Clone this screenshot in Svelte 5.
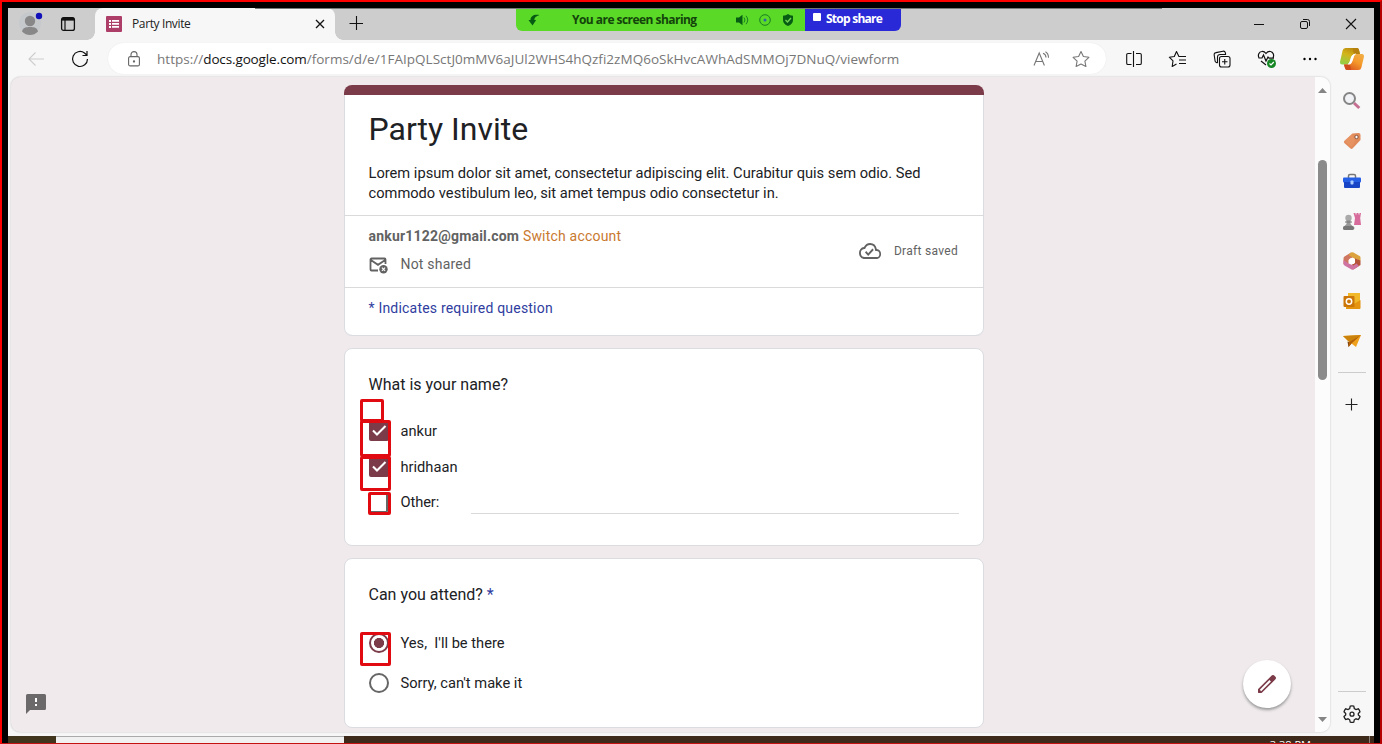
<script>
  const names = [
    { label: 'ankur', checked: true },
    { label: 'hridhaan', checked: true }
  ];
  const replies = [
    { label: "Yes,\u00a0 I'll be there", selected: true },
    { label: "Sorry, can't make it", selected: false }
  ];
  const marks = [
    { x: 360, y: 399, w: 24, h: 23 },
    { x: 360, y: 420, w: 31, h: 37 },
    { x: 360, y: 456, w: 31, h: 35 },
    { x: 368, y: 492, w: 23, h: 23 },
    { x: 360, y: 632, w: 31, h: 34 }
  ];
</script>

<div class="screen">
  <div class="window">
    <header class="tabs">
      <div class="lead">
        <svg class="avatar" width="26" height="26" viewBox="0 0 26 26">
          <circle cx="12" cy="14" r="11" fill="#c5c9cc" />
          <circle cx="12" cy="12" r="5.2" fill="#888" />
          <path d="M4 22.500C5 18.500 8 18 12 18s7 .5 8 4.500Q16.500 26 12 26T4 22.500Z" fill="#888" />
          <circle cx="21" cy="7" r="3.200" fill="#1210b8" />
        </svg>
        <svg class="workspace" width="16" height="16" viewBox="0 0 16 16" fill="none" stroke="#111">
          <rect x="1.600" y="1.600" width="12.800" height="12.800" rx="2" stroke-width="1.300" />
          <path d="M2 3.200h12" stroke-width="2.800" /><path d="M5 4v10" stroke-width="1.200" />
        </svg>
      </div>
      <div class="tab">
        <svg width="16" height="16" viewBox="0 0 16 16">
          <rect width="16" height="16" rx="1" fill="#ad3e68" />
          <path d="M3 4h2v2H3zm3 0h7v1.700H6zM3 7h2v2H3zm3 0h7v1.700H6zM3 10h2v2H3zm3 0h7v1.700H6z" fill="#fff" />
        </svg>
        <span class="tabname">Party Invite</span>
        <svg class="close" width="10" height="10" viewBox="0 0 10 10"><path d="m1 1 8 8M9 1 1 9" stroke="#111" stroke-width="1.300" /></svg>
      </div>
      <svg class="newtab" width="14" height="14" viewBox="0 0 14 14"><path d="M7.500 0v14M.5 7.500H14" stroke="#111" stroke-width="1.100" /></svg>
      <div class="share">
        <div class="sharing">
          <svg class="bolt" width="12" height="12" viewBox="0 0 12 12"><path d="M11.500 1C6 0 2.500 2 2.500 6H.5l4 5.500L8.200 6H6.300C6.200 3.800 8 2.200 11.500 1Z" fill="#075c14" /></svg>
          <span>You are screen sharing</span>
          <svg class="sound" width="13" height="12" viewBox="0 0 13 12"><path d="M0 3.500h3L6.500.8v10.400L3 8.500H0Z" fill="#075c14" /><path d="M8 3.500q2 2.500 0 5M10 1.800q3.500 4.200 0 8.400" stroke="#187f22" fill="none" /></svg>
          <svg width="12" height="12" viewBox="0 0 12 12"><circle cx="6" cy="6" r="5.300" fill="none" stroke="#187f22" /><circle cx="6" cy="6" r="1.500" fill="#2c64a8" /></svg>
          <svg class="shield" width="12" height="12" viewBox="0 0 12 12"><path d="M6 0Q8 1.500 11 1.700V6q0 4-5 6-5-2-5-6V1.700Q4 1.500 6 0Z" fill="#075c14" /><path d="m3.500 6 2 2 3.500-4" stroke="#74d654" stroke-width="1.300" fill="none" /></svg>
        </div>
        <div class="stop"><i></i><span>Stop share</span></div>
      </div>
      <div class="controls">
        <svg width="10" height="12" viewBox="0 0 10 12"><path d="M0 6.500h10" stroke="#111" /></svg>
        <svg width="12" height="12" viewBox="0 0 12 12" fill="none" stroke="#111"><rect x="1.500" y="3.500" width="7" height="7" rx="1.500" /><path d="M4 1.500h4.500a2 2 0 0 1 2 2V8" /></svg>
        <svg width="12" height="12" viewBox="0 0 12 12"><path d="m1 1 10 10M11 1 1 11" stroke="#111" stroke-width="1.100" /></svg>
      </div>
    </header>

    <nav class="toolbar">
      <svg class="back" width="16" height="14" viewBox="0 0 16 14"><path d="M16 7H1M7.500.5 1 7l6.500 6.500" fill="none" stroke="#cdcdcd" stroke-width="1.100" /></svg>
      <svg class="reload" width="18" height="18" viewBox="0 0 18 18" fill="none" stroke="#111" stroke-width="1.200"><path d="M16.500 9A7.500 7.500 0 1 1 13.500 3L16 5.300M16 1v4.500h-4.500" /></svg>
      <div class="address">
        <svg class="lock" width="12" height="16" viewBox="0 0 12 16" fill="none" stroke="#666" stroke-width="1.100"><rect x=".6" y="5.600" width="10.800" height="9.300" rx="1.500" /><path d="M3 5.500V3.600a3 3 0 0 1 6 0v1.900" /><circle cx="6" cy="10.500" r=".6" fill="#444" /></svg>
        <span class="url">https://<b>docs.google.com</b>/forms/d/e/1FAIpQLSctJ0mMV6aJUl2WHS4hQzfi2zMQ6oSkHvcAWhAdSMMOj7DNuQ/viewform</span>
        <svg class="read" width="18" height="16" viewBox="0 0 18 16" fill="none" stroke="#777" stroke-width="1.100"><path d="M2 14.500 7.200 2l5.200 12.500M3.700 10.500h7M11 2.200q3 1 3 4.300M13.500.7Q16.500 2.500 16.500 6.800" /></svg>
        <svg width="18" height="18" viewBox="0 0 18 18" fill="none" stroke="#777" stroke-width="1.100" stroke-linejoin="round"><path d="m9 1.500 2.400 5 5.500.8-4 3.800 1 5.400L9 14l-4.900 2.500 1-5.400-4-3.800 5.500-.8Z" /></svg>
      </div>
      <div class="actions">
        <svg width="16" height="16" viewBox="0 0 16 16" fill="none" stroke="#111" stroke-width="1.100"><path d="M5.500 2.500H2A1.300 1.300 0 0 0 .7 3.800v8.400A1.300 1.300 0 0 0 2 13.500h3.500M10 2.500h4a1.300 1.300 0 0 1 1.300 1.300v8.400a1.300 1.300 0 0 1-1.300 1.300h-4M7.500 0v16" /></svg>
        <svg width="18" height="18" viewBox="0 0 18 18" fill="none" stroke="#111" stroke-width="1.100" stroke-linejoin="round"><path d="M11.500 6.500h-.6L8.500 1.500 6.300 6.500l-5 .7 3.700 3.600-.8 5.700 4.300-2.500M11.500 6.500H18M11 10h7M11 13.500h7" /></svg>
        <svg width="18" height="18" viewBox="0 0 18 18" fill="none" stroke="#111" stroke-width="1.100"><rect x="6.500" y="6.500" width="10.500" height="10.500" rx="2" /><path d="M11.750 9v5.500M9 11.750h5.500M4.500 13 3 12.300a2 2 0 0 1-1-1.800L1.200 5A2 2 0 0 1 3 2.600L10 1.200a2 2 0 0 1 2.300 1.500l.4 1.800M4.500 13V7a2.500 2.500 0 0 1 2.500-2.500h6" /></svg>
        <svg width="20" height="18" viewBox="0 0 20 18" fill="none" stroke="#111" stroke-width="1.200"><path d="M2 8C.5 5 2 1.800 4.800 1.500 7 1.200 8 2.200 9 3.500c1-1.300 2.200-2.300 4.400-2C16 2 17.500 4.800 16 8M4 11l5 4M1.500 8H5l1.500-3L9 11l2-4 1 1.200h5" /><circle cx="14.500" cy="13.500" r="4.500" fill="#168725" stroke="none" /><path d="m12.500 13.500 1.500 1.500 2.800-3" stroke="#fff" /></svg>
        <svg width="14" height="4" viewBox="0 0 14 4"><circle cx="1.500" cy="2" r="1.200" /><circle cx="7" cy="2" r="1.200" /><circle cx="12.500" cy="2" r="1.200" /></svg>
      </div>
      <svg class="copilot" width="24" height="24" viewBox="0 0 24 24">
        <defs><linearGradient id="ca" x1=".7" x2=".2" y2="1"><stop stop-color="#b9850c" /><stop offset=".45" stop-color="#d3b51a" /><stop offset="1" stop-color="#8fd04a" /></linearGradient><linearGradient id="cb" x1="1" x2=".3" y2="1"><stop stop-color="#f0b04a" /><stop offset=".5" stop-color="#f59a2a" /><stop offset="1" stop-color="#dc5a20" /></linearGradient></defs>
        <path d="M5.500 1H17q1.500 0 2 2l1 4.500h-6q-2.200 0-3 2.500l-1.700 5.500Q8.700 17.500 6 17.500H2Q-.6 17.500.2 14L2.600 3.500Q3.200 1 5.500 1Z" fill="url(#ca)" />
        <path d="M18.500 23H7q-1.500 0-2-2l-1-3.500h5q2.200 0 3-2.500l1.700-5.500Q14.400 7 17 7h5q2.600 0 1.800 3.500L21.400 20.500Q20.800 23 18.500 23Z" fill="url(#cb)" />
        <path d="M13 1h4q1.500 0 2 2l1 4h-4.500Q13.800 7 13.200 4.500Z" fill="#b5800d" />
        <path d="M11 23H7q-1.500 0-2-2l-1-3.500h4q2 0 2.500 2Z" fill="#cf4d1d" />
        <path d="M8.500 17q2.700-.3 3.500-3l1.700-5q.5-1.500 1.800-2-2.800.2-3.700 3l-1.600 5q-.5 1.500-1.700 2Z" fill="#fff" stroke="#fff" stroke-width=".8" />
      </svg>
    </nav>

    <div class="body">
      <main class="page">
        <div class="forms">
          <section class="card intro">
            <h1>Party Invite</h1>
            <p>Lorem ipsum dolor sit amet, consectetur adipiscing elit. Curabitur quis sem odio. Sed<br />commodo vestibulum leo, sit amet tempus odio consectetur in.</p>
            <div class="account">
              <div class="who">
                <div class="email"><strong>ankur1122@gmail.com</strong> <a>Switch account</a></div>
                <div class="shared">
                  <svg width="20" height="18" viewBox="0 0 20 18"><path d="M9 14.500H2.500a1 1 0 0 1-1-1v-10a1 1 0 0 1 1-1h13a1 1 0 0 1 1 1V8M1.800 4 9 8.800 16.200 4" fill="none" stroke="#626262" stroke-width="1.800" /><circle cx="14.500" cy="13.200" r="4.200" fill="#626262" /><path d="m12.900 11.600 3.200 3.200m0-3.200-3.200 3.200" stroke="#fff" stroke-width="1.100" /></svg>
                  <span>Not shared</span>
                </div>
              </div>
              <svg class="cloud" width="24" height="24" viewBox="0 0 24 24"><path d="M19.350 10.040A7.490 7.490 0 0 0 12 4C9.110 4 6.600 5.640 5.350 8.040A5.994 5.994 0 0 0 0 14c0 3.310 2.690 6 6 6h13c2.760 0 5-2.240 5-5 0-2.640-2.050-4.780-4.650-4.960ZM19 18H6a4 4 0 0 1-.44-7.970l1.070-.11.500-.95A5.470 5.470 0 0 1 12 6a5.500 5.500 0 0 1 5.390 4.430l.3 1.500 1.530.11A2.980 2.980 0 0 1 19 18Zm-9-3.820-2.090-2.090L6.500 13.500 10 17l6.010-6.010-1.410-1.410Z" fill="#626262" transform="translate(1 0) scale(.92 1)" /></svg>
              <span class="draft">Draft saved</span>
            </div>
            <div class="required">* Indicates required question</div>
          </section>

          <section class="card names">
            <h2>What is your name?</h2>
            {#each names as item}
              <label class="check"><span class="box" class:on={item.checked}><svg width="20" height="20" viewBox="0 0 20 20"><path d="m4 9.500 4 4L16.500 5" fill="none" stroke="#fff" stroke-width="2.100" /></svg></span><span>{item.label}</span></label>
            {/each}
            <label class="check other"><span class="box"></span><span class="otherlabel">Other:</span><span class="entry"></span></label>
          </section>

          <section class="card attend">
            <h2>Can you attend? <em>*</em></h2>
            {#each replies as item}
              <label class="radio"><span class="ring" class:on={item.selected}></span><span>{item.label}</span></label>
            {/each}
          </section>
        </div>
        <svg class="report" width="20" height="20" viewBox="0 0 20 20"><path d="M1.500 0h17A1.500 1.500 0 0 1 20 1.500v13a1.500 1.500 0 0 1-1.500 1.500H4l-4 4V1.500A1.500 1.500 0 0 1 1.500 0Z" fill="#6b696a" /><path d="M9 4h2v4H9zm0 6h2v2H9z" fill="#fff" /></svg>
        <div class="edit"><svg width="24" height="24" viewBox="0 0 24 24"><path d="M3 17.460v3.040c0 .28.220.5.500.5h3.040c.13 0 .26-.05.350-.15L19.500 8.240 20.710 7.040a2 2 0 0 0 0-2l-1.750-1.750a2 2 0 0 0-2 0L3.150 17.100c-.1.100-.15.220-.15.360Z" fill="#7b3b49" /><path d="m5.500 18.500 9.700-9.700" stroke="#fff" stroke-width="2" /></svg></div>
        <div class="scroll"><svg width="9" height="5" viewBox="0 0 9 5"><path d="m0 5 4.500-5L9 5Z" fill="#858585" /></svg><i></i><svg class="down" width="9" height="5" viewBox="0 0 9 5"><path d="M0 0h9L4.500 5Z" fill="#858585" /></svg></div>
      </main>

      <aside>
        <svg viewBox="0 0 20 20"><path d="m12 12 5.300 5" stroke="#c66e91" stroke-width="3" /><circle cx="7.500" cy="7.500" r="5.500" fill="#f1f2f5" stroke="#858585" stroke-width="2" /></svg>
        <svg viewBox="0 0 20 20"><path d="M10.500 2.500 16.500 2Q18.500 2 18.500 4v5L10.500 17.500q-1 .8-2 0L2.300 12q-1-1 0-2Z" fill="#e18a5a" /><path d="m2.300 10 8-7.500 3 7-3.500 7Z" fill="#ee9b6b" opacity=".45" /><circle cx="14.500" cy="6" r="1.700" fill="#fff" stroke="#87543e" /></svg>
        <svg viewBox="0 0 20 20"><path d="M6.500 7V5q0-1.500 1.500-1.500h4q1.500 0 1.500 1.500v2" fill="none" stroke="#777" stroke-width="1.500" /><rect x="1" y="6.500" width="18" height="5" rx="1" fill="#245fe5" /><path d="M2 11h16v5q0 1-1 1H3q-1 0-1-1Z" fill="#1745c6" /><rect x="8.500" y="9.500" width="3" height="4" rx=".8" fill="#aacaff" /></svg>
        <svg viewBox="0 0 20 20"><path d="M11.500 2h2v1.500h1V2h2v1.500h1V2H19l-.8 5 .8 7h-7l1-7Z" fill="#d76b9b" /><circle cx="6.500" cy="7" r="3.200" fill="#aaa" /><path d="M4.500 9h4v4l2 2H2.500l2-2Z" fill="#999" /><path d="M3 11h7M1.500 17h11" stroke="#777" stroke-width="1.200" /><rect x="1" y="15" width="11" height="4" rx="1.500" fill="#777" /></svg>
        <svg viewBox="0 0 20 20"><path d="M9 1.500 2.500 5.500q-1 .7-1 2V13l5 1.500V9l6-4Z" fill="#ce765f" /><path d="m9 1.500 2-.2 7 4q.5.500.5 1.500v3L13 8 6.500 4Z" fill="#dba23d" /><path d="m13 7.500 5.500 2V14l-7 4.500-1.500-5 3-1.500Z" fill="#b55339" /><path d="m1.500 9 5 3.500 5 2 3-2 2.500 2.500-5.500 3.500q-1 .5-2 0l-7-4q-1-.7-1-2Z" fill="#ce73a2" /><circle cx="10" cy="10" r="3.100" fill="#fff" /></svg>
        <svg viewBox="0 0 20 20"><path d="M6 2h12v16H4V5h2Z" fill="#f1b82a" /><path d="m6 9 6 4 6.500-4v8q0 1-1 1H4Z" fill="#e4940e" /><rect x="1.500" y="5" width="11" height="11" rx="1" fill="#cc7608" /><circle cx="7" cy="10.500" r="2.700" fill="none" stroke="#fff" stroke-width="1.500" /></svg>
        <svg viewBox="0 0 20 20"><path d="m1 5 18-1-5 12-4.500-3.500Z" fill="#efa11d" /><path d="m1 5 18-1-12 7Z" fill="#cb830b" /><path d="m5.500 10.500 1 5.500 3-3.500Z" fill="#7c420b" /><path d="m7 11 12-7-9.500 8.500L6.500 16Z" fill="#b36007" /></svg>
        <hr />
        <svg class="add" viewBox="0 0 20 20"><path d="M9.500 3.500v12M3.500 9.500h12" stroke="#222" stroke-width="1.100" /></svg>
        <hr class="end" />
        <svg class="gear" viewBox="0 0 20 20" fill="none" stroke="#222" stroke-width="1.300"><path d="M8.200 2.200Q10 1.700 11.800 2.200l.5 2.300 1.700 1 2.300-.7q1.200 1.200 1.700 3L16.300 9.500v1.500l1.700 1.500q-.5 1.800-1.700 3l-2.300-.7-1.700 1-.5 2.300q-1.800.5-3.600 0l-.5-2.300-1.700-1-2.300.7q-1.200-1.200-1.700-3L3.700 11V9.500L2 7.800q.5-1.800 1.700-3l2.300.7 1.700-1Z" /><circle cx="10" cy="10.200" r="2" /></svg>
      </aside>
    </div>
  </div>
  <footer><span class="dark"></span><span class="light"></span><span class="clock">3:38 PM</span><span class="peek"></span></footer>
  <div class="topline"></div>
  {#each marks as m}
    <div class="mark" style="left:{m.x}px;top:{m.y}px;width:{m.w}px;height:{m.h}px"></div>
  {/each}
</div>

<style>
  :global(body) { overflow: hidden; }
  * { box-sizing: border-box; }
  svg { display: block; flex: none; }
  .screen { position: relative; width: 1382px; height: 744px; background: #000; border: 2px solid #f00; border-right: 2px solid #b40000; border-bottom: 1px solid #c41212; padding: 6px 6px 0; overflow: hidden; font-family: "Open Sans", sans-serif; }
  .window { height: 728px; background: #f7f7f7; display: flex; flex-direction: column; }
  .tabs { height: 32px; flex: none; display: flex; background: #cdcdcd; }
  .lead { width: 87px; display: flex; padding: 1px 0 0 10px; }
  .workspace { margin: 7px 0 0 16px; }
  .tab { width: 240px; background: #f7f7f7; border-radius: 8px 8px 0 0; display: flex; align-items: center; padding: 0 10.500px 0 11px; position: relative; }
  .tab::before, .tab::after { content: ""; position: absolute; bottom: 0; width: 8px; height: 8px; }
  .tab::before { left: -8px; background: radial-gradient(circle at 0 0, #cdcdcd 7.500px, #f7f7f7 8px); }
  .tab::after { right: -8px; background: radial-gradient(circle at 100% 0, #cdcdcd 7.500px, #f7f7f7 8px); }
  .tabname { margin-left: 10px; font-size: 12px; letter-spacing: -.38px; color: #222; white-space: nowrap; position: relative; top: -.5px; }
  .close { margin-left: auto; }
  .newtab { margin: 8px 0 0 14px; }
  .share { width: 385px; height: 23px; display: flex; margin-left: 153px; border-radius: 0 0 6px 6px; overflow: hidden; font-size: 12px; font-weight: 700; }
  .sharing { width: 289px; background: #5ad926; color: #12440b; display: flex; align-items: center; padding-left: 12px; }
  .sharing span { width: 125px; margin-left: 32px; white-space: nowrap; letter-spacing: -.54px; }
  .sound { margin: 0 10px 0 39px; }
  .shield { margin-left: 11px; }
  .stop { flex: 1; background: #2929d8; color: #fff; display: flex; padding-left: 8px; line-height: 22px; white-space: nowrap; letter-spacing: -.75px; }
  .stop i { width: 8px; height: 8px; margin: 5px 5px 0 0; border-radius: 1px; background: #fff; }
  .controls { display: flex; gap: 34px; margin-left: auto; padding: 10px 17px 0 0; }
  .controls svg:first-child { margin-right: 1px; }
  .toolbar { height: 37px; flex: none; display: flex; align-items: center; }
  .back { margin-left: 20px; }
  .reload { margin-left: 27px; }
  .address { height: 31px; width: 998px; margin-left: 19px; background: #fff; border-radius: 16px; display: flex; align-items: center; padding: 0 16px 0 20px; box-shadow: 0 0 1px #ddd; }
  .url { margin-left: 17px; font-size: 13.500px; color: #777; white-space: nowrap; letter-spacing: .025px; }
  .url b { font-weight: 400; color: #111; letter-spacing: -.13px; }
  .read { margin: 0 22px 0 auto; }
  .actions { display: flex; align-items: center; width: 191px; margin-left: 20px; justify-content: space-between; }
  .copilot { margin-left: 23px; }
  .body { flex: 1; min-height: 0; display: flex; }
  .page { width: 1319px; height: 655px; margin-left: 3px; background: #f0eaec; border-radius: 9px; box-shadow: 0 0 2px #bbb; position: relative; overflow: hidden; display: flex; }
  .forms { width: 640px; margin: 8px 0 0 333px; display: flex; flex-direction: column; gap: 12px; font-family: Roboto, sans-serif; color: #202124; }
  .card { background: #fff; border: 1px solid #dadce0; border-radius: 8px; flex: none; }
  .intro { height: 251px; border-top: 10px solid #7b3b49; overflow: hidden; border-left: 0; border-right: 0; box-shadow: inset 1px 0 #dadce0, inset -1px 0 #dadce0; }
  h1 { font-size: 32px; font-weight: 400; line-height: 40px; margin: 14px 0 0 24.500px; }
  p { font-size: 14.667px; line-height: 20px; margin: 14px 0 0 24.500px; height: 52px; white-space: nowrap; }
  .account { height: 73px; border: solid #dadada; border-width: 1px 0; display: flex; padding: 0 26px 2px 24.500px; color: #626262; align-items: center; }
  .who { flex: 1; font-size: 14px; letter-spacing: .2px; line-height: 20px; align-self: flex-start; padding-top: 10px; }
  .email, .shared { white-space: nowrap; }
  .email strong { font-weight: 700; }
  a { color: #c9792f; }
  .shared { display: flex; margin-top: 8px; gap: 12px; }
  .shared svg { margin-top: 2px; }
  .cloud { margin-right: 12px; }
  .draft { font-size: 12px; letter-spacing: .3px; }
  .required { margin: 10px 0 0 24.500px; font-size: 14px; letter-spacing: .2px; line-height: 20px; color: #303da0; }
  .names { height: 198px; padding: 24px 24px 0 23.500px; }
  h2 { font-size: 16px; line-height: 24px; font-weight: 400; margin: 0; }
  h2 em { color: #303da0; font-style: normal; }
  .check, .radio { display: flex; align-items: center; font-size: 14.667px; line-height: 20px; height: 20px; margin-bottom: 16px; gap: 12px; }
  h2 + .check { margin-top: 24px; }
  .box { width: 20px; height: 20px; border: 2px solid #666; border-radius: 2px; }
  .box svg { visibility: hidden; margin: -2px; }
  .box.on { background: #7b3b49; border-color: #7b3b49; }
  .box.on svg { visibility: visible; }
  .otherlabel { width: 59px; position: relative; top: -1px; letter-spacing: -.1px; }
  .entry { width: 488px; height: 22px; border-bottom: 1px solid #d9d9d9; }
  .attend { height: 170px; padding: 24px 24px 0 23.500px; }
  .radio { margin-bottom: 20px; }
  h2 + .radio { margin-top: 26px; }
  .ring { width: 20px; height: 20px; border: 2px solid #666; border-radius: 50%; }
  .ring.on { border-color: #7b3b49; background: radial-gradient(circle, #7b3b49 4.800px, transparent 5.300px); }
  .report { position: absolute; left: 15px; bottom: 18px; }
  .edit { position: absolute; left: 1232px; top: 583px; width: 48px; height: 48px; border-radius: 50%; background: #fff; box-shadow: 0 2px 3px #999; display: grid; place-items: center; }
  .scroll { width: 15px; margin-left: auto; background: #fcfcfc; display: flex; flex-direction: column; align-items: center; padding: 11px 0 10px; }
  .scroll i { width: 9px; height: 220px; border-radius: 5px; background: #8b8b8b; margin-top: 67px; }
  .down { margin-top: auto; }
  aside { width: 44px; padding-top: 14px; display: flex; flex-direction: column; align-items: center; gap: 20px; }
  aside svg { width: 20px; height: 20px; }
  hr { width: 28px; height: 1px; border: 0; background: #ccc; margin: 1px 0 2px; flex: none; }
  .end { margin-top: auto; }
  .gear { margin: -10px 0 12px; }
  footer { height: 7px; display: flex; background: #3d2a1b; overflow: hidden; }
  .dark { width: 48px; background: #40351d; }
  .light { width: 288px; background: #f1f1f1; border-top: 1px solid #aaa; }
  .clock { margin: 3px 59px 0 auto; color: #fff; font-size: 11px; line-height: 12px; height: 14px; }
  .peek { width: 1px; margin: 0 4px 0 -1px; background: #8b8078; }
  .topline { position: absolute; left: 253px; top: 6px; width: 907px; height: 1px; background: #777; }
  .mark { position: absolute; transform: translate(-2px, -2px); border: 3px solid #e10a10; border-radius: 2px; }
</style>
